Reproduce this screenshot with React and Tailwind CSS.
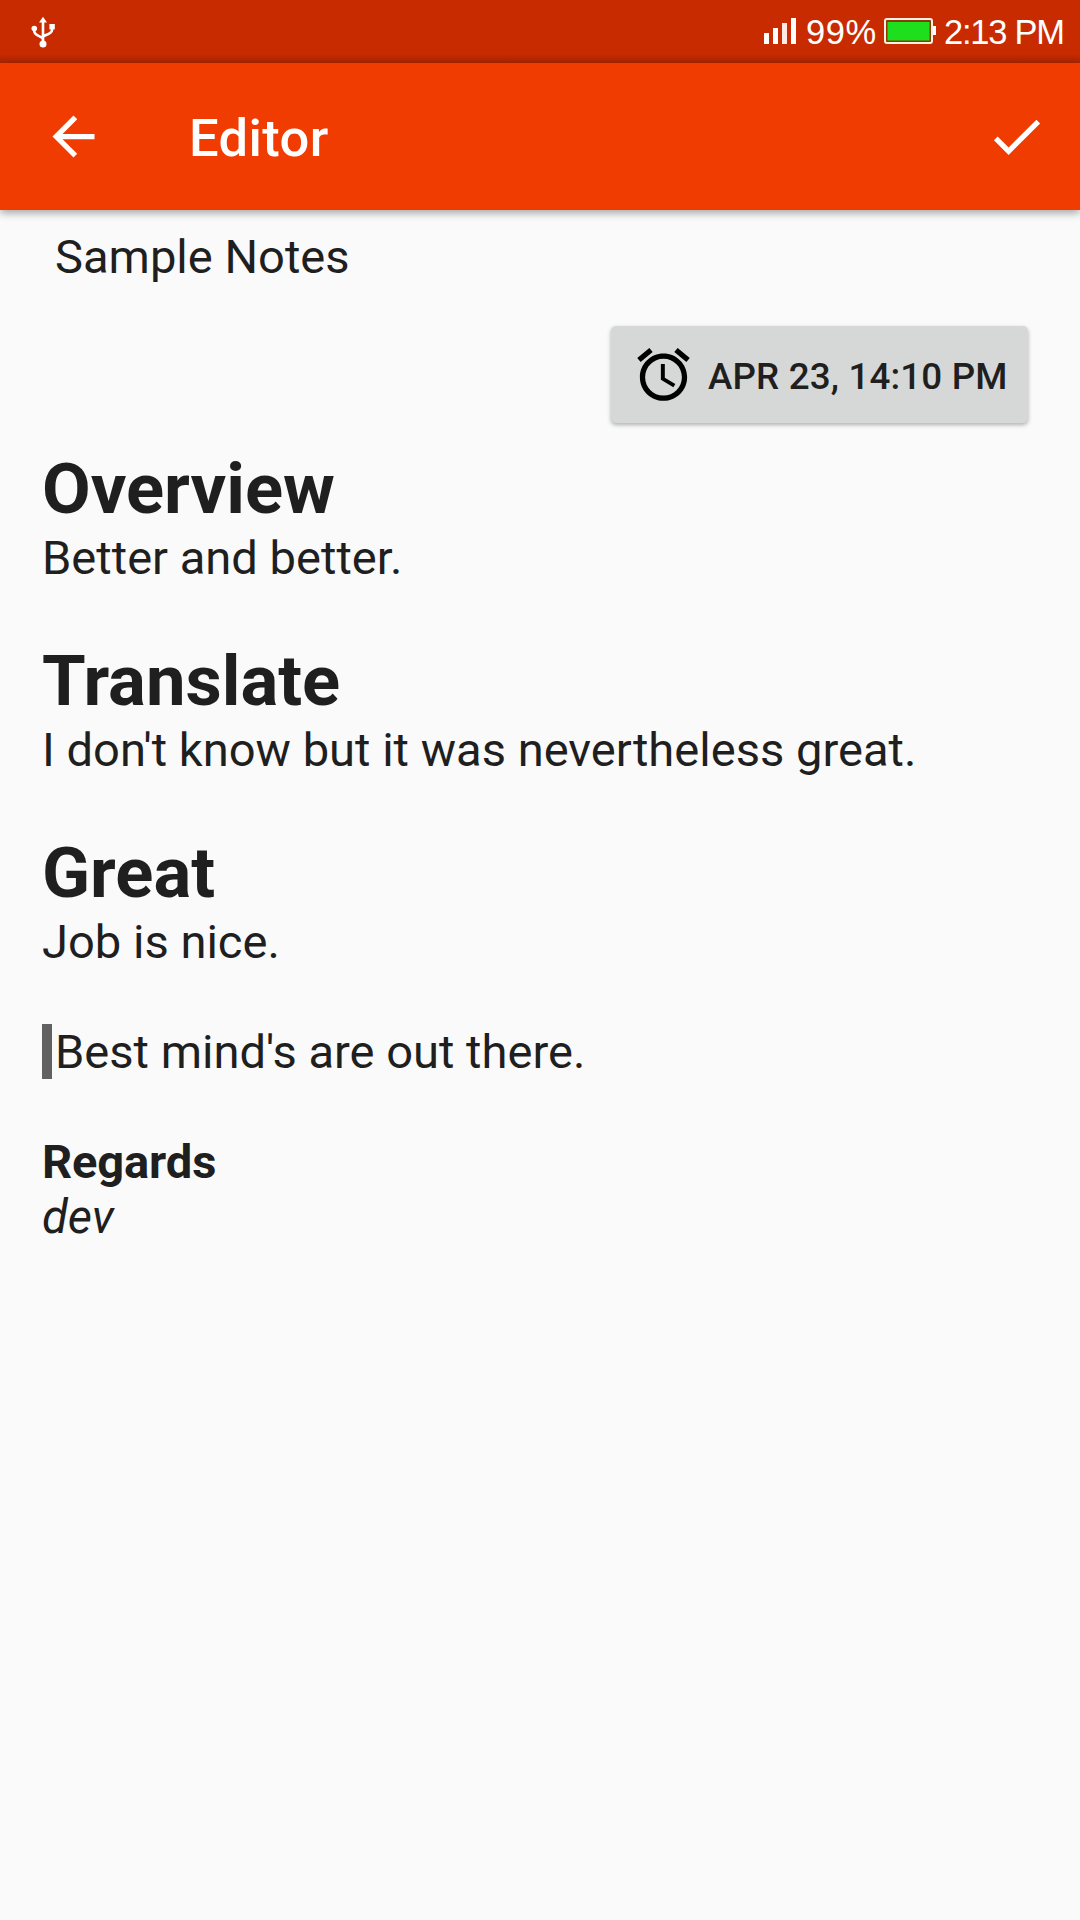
function UsbIcon() {
  return (
    <svg className="ml-[31px] mt-[16px] h-[32px] w-[25px]" viewBox="0 0 25 32" fill="none">
      <path d="M12 5V27M3.3 12v3.5c0 4.5 8.7 4.5 8.7 8M21 11v3c0 5-9 4.5-9 7.5" stroke="#fff" strokeWidth="2.6" />
      <path d="M12 .8l4 5.7H8z" fill="#fff" />
      <circle cx="3.3" cy="12.5" r="2.8" fill="#fff" />
      <rect x="18.4" y="8" width="5.4" height="5.4" fill="#fff" />
      <circle cx="12" cy="28" r="3.5" fill="#fff" />
    </svg>
  );
}

function StatusBar() {
  return (
    <div className="flex h-[63px] justify-between bg-linear-to-b from-[#c92b00] from-85% to-[#ab2400] font-['Liberation_Sans',sans-serif] text-white">
      <UsbIcon />
      <div className="flex pr-[15px]">
        <svg className="mt-[18px] h-[26px] w-[33px]" viewBox="0 0 33 26" fill="#fff">
          <rect x="0" y="15" width="5" height="11" />
          <rect x="9" y="10" width="5" height="16" />
          <rect x="18" y="5" width="5" height="21" fill="#ffe9e2" />
          <rect x="27" y="0" width="5" height="26" />
        </svg>
        <span className="ml-[9px] mt-[12px] w-[73px] whitespace-nowrap text-[34.5px] leading-[40px] tracking-[0.6px]">99%</span>
        <svg className="ml-[5px] mt-[18px] h-[26px] w-[52px]" viewBox="0 0 52 26">
          <rect x="1" y="1" width="47" height="24" rx="2" fill="#8a3c00" stroke="#fff0e8" strokeWidth="2" />
          <rect x="49" y="8" width="3" height="9" fill="#fff" />
          <rect x="3.5" y="4" width="42" height="18.5" fill="#1ddf1d" />
        </svg>
        <span className="ml-[8px] mt-[12px] w-[121px] whitespace-nowrap text-[34.5px] leading-[40px] tracking-[-1.25px]">2:13 PM</span>
      </div>
    </div>
  );
}

function AppBar() {
  return (
    <header className="relative flex h-[147px] items-center bg-[#f03c00] pl-[42px] pr-[32px] text-white shadow-[0_3px_8px_rgba(0,0,0,0.35)]">
      <svg className="size-[63px]" viewBox="0 0 24 24" fill="currentColor">
        <path d="M20 11H7.83l5.59-5.59L12 4l-8 8 8 8 1.41-1.41L7.83 13H20v-2z" />
      </svg>
      <h1 className="ml-[84px] mt-[3px] text-[52.5px] font-medium leading-[62px] tracking-[0.4px]">Editor</h1>
      <svg className="ml-auto size-[63px]" viewBox="0 0 24 24" fill="currentColor">
        <path d="M9 16.17L4.83 12l-1.42 1.41L9 19 21 7l-1.41-1.41z" />
      </svg>
    </header>
  );
}

function ReminderButton() {
  return (
    <button className="ml-auto mr-[52px] mt-[42px] flex h-[97px] w-[417px] rounded-[5px] bg-[#d6d8d7] pl-[21px] shadow-[0_2px_4px_rgba(0,0,0,0.3)]">
      <svg className="mt-[17px] size-[63px] shrink-0" viewBox="0 0 24 24" fill="#000">
        <path d="M22 5.72l-4.6-3.86-1.29 1.53 4.6 3.86L22 5.72zM7.88 3.39L6.6 1.86 2 5.71l1.29 1.53 4.59-3.85zM12.5 8H11v6l4.75 2.85.75-1.23-4-2.37V8zM12 4c-4.97 0-9 4.03-9 9s4.02 9 9 9c4.97 0 9-4.03 9-9s-4.03-9-9-9zm0 16c-3.87 0-7-3.13-7-7s3.13-7 7-7 7 3.13 7 7-3.13 7-7 7z" />
      </svg>
      <span className="ml-[13px] mt-[29px] whitespace-nowrap text-[36.75px] font-medium leading-[43px] tracking-[0.15px]">APR 23, 14:10 PM</span>
    </button>
  );
}

function Section({ title, children }) {
  return (
    <section className="mb-[55px]">
      <h2 className="text-[70.6px] font-bold leading-[82px]">{title}</h2>
      <p>{children}</p>
    </section>
  );
}

export default function App() {
  return (
    <div className="flex h-[1920px] w-[1080px] flex-col overflow-hidden bg-[#fafafa] font-[Roboto,sans-serif] text-[#1f1f1f]">
      <StatusBar />
      <AppBar />
      <main className="flex flex-col text-[47.1px] leading-[55px]">
        <p className="ml-[55px] mt-[19px]">Sample Notes</p>
        <ReminderButton />
        <article className="ml-[42px] mt-[25px]">
          <Section title="Overview">Better and better.</Section>
          <Section title="Translate">I don't know but it was nevertheless great.</Section>
          <Section title="Great">Job is nice.</Section>
          <blockquote className="mb-[55px] border-l-[10px] border-[#616161] pl-[3px]">Best mind's are out there.</blockquote>
          <p className="font-bold tracking-[-0.15px]">Regards</p>
          <p className="italic">dev</p>
        </article>
      </main>
    </div>
  );
}
